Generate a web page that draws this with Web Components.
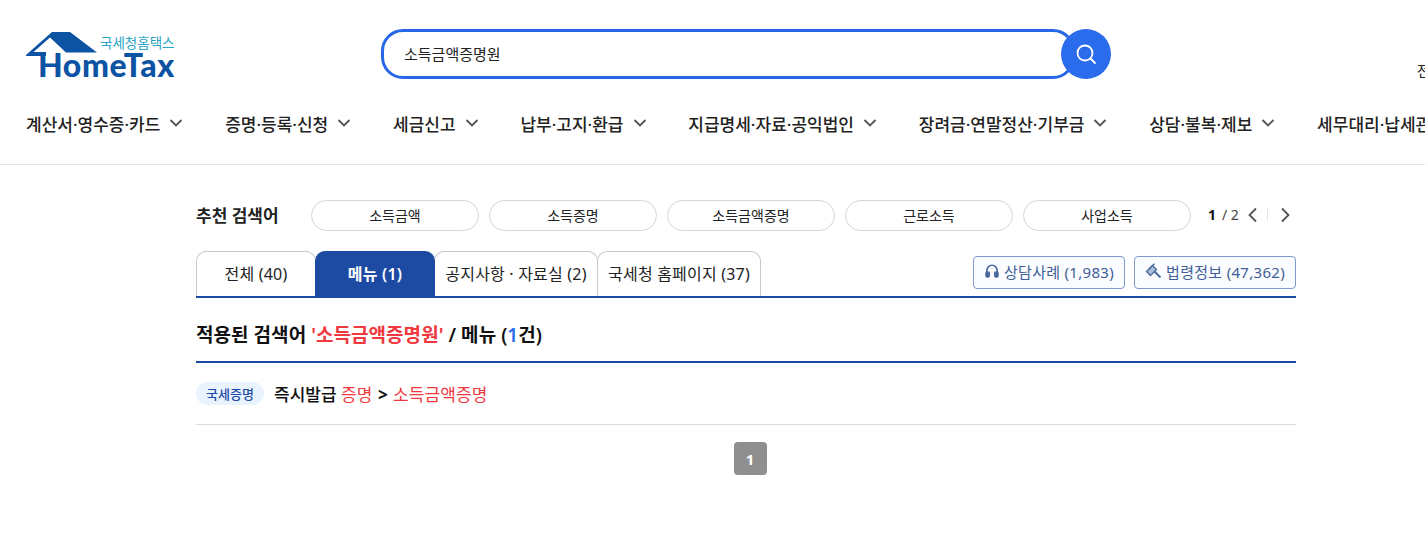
<!DOCTYPE html>
<html lang="ko">
<head>
<meta charset="utf-8">
<title>국세청홈택스</title>
<style>
  html, body { margin: 0; padding: 0; background: #fff; overflow: hidden; height: 100%; }
  body { width: 1492px; font-family: "Noto Sans", "Noto Sans CJK KR", sans-serif; color: #222; }
</style>
</head>
<body>
<site-header></site-header>
<main-nav>
  <nav-item>계산서·영수증·카드</nav-item>
  <nav-item>증명·등록·신청</nav-item>
  <nav-item>세금신고</nav-item>
  <nav-item>납부·고지·환급</nav-item>
  <nav-item>지급명세·자료·공익법인</nav-item>
  <nav-item>장려금·연말정산·기부금</nav-item>
  <nav-item>상담·불복·제보</nav-item>
  <nav-item>세무대리·납세관리</nav-item>
</main-nav>
<search-result></search-result>

<script>
class SiteHeader extends HTMLElement {
  connectedCallback() {
    this.attachShadow({mode: "open"}).innerHTML = `
    <style>
      :host { display: flex; align-items: flex-start; height: 98px; padding: 29px 0 0 26px; box-sizing: border-box; }
      .logo { position: relative; width: 150px; height: 52px; flex: none; }
      .logo svg { display: block; }
      .sub { position: absolute; left: 74px; top: 7px; font-size: 13.500px; line-height: 14px; color: #2aa5c6; white-space: nowrap; }
      .name { position: absolute; left: 12px; top: 23px; font: 900 32px/26px Lato, sans-serif; letter-spacing: .6px; color: #0d53a4; white-space: nowrap; }
      .search { display: flex; align-items: center; margin-left: 205px; flex: none; }
      .box { width: 694px; height: 50px; box-sizing: border-box; border: 3px solid #2667e8; border-radius: 22px; padding: 0 0 2px 20px; display: flex; align-items: center; font-size: 15px; color: #222; }
      .btn { width: 50px; height: 50px; border-radius: 50%; background: #2a6ceb; margin-left: -14px; display: flex; align-items: center; justify-content: center; flex: none; }
      .util { margin: 33px 0 0 306px; font-size: 14px; line-height: 18px; white-space: nowrap; color: #222; }
    </style>
    <div class="logo">
      <svg width="150" height="52" viewBox="0 0 150 52">
        <path fill="#0d53a4" d="M0 26 26 3H44L71 23.500H40L24 8.500 7.500 23H20V27H0Z"/>
      </svg>
      <span class="name">HomeTax</span>
      <span class="sub">국세청홈택스</span>
    </div>
    <div class="search">
      <div class="box">소득금액증명원</div>
      <div class="btn">
        <svg width="24" height="24" viewBox="0 0 24 24" fill="none" stroke="#fff" stroke-width="1.800" stroke-linecap="round"><circle cx="11" cy="11" r="7.500"/><path d="M16.500 16.500 21 21"/></svg>
      </div>
    </div>
    <div class="util">전체메뉴</div>`;
  }
}
customElements.define("site-header", SiteHeader);

class MainNav extends HTMLElement {
  connectedCallback() {
    this.attachShadow({mode: "open"}).innerHTML = `
    <style>
      :host { display: flex; height: 67px; box-sizing: border-box; padding: 0 0 0 26px; border-bottom: 1px solid #e2e2e2; gap: 41.800px; white-space: nowrap; overflow: hidden; }
    </style>
    <slot></slot>`;
  }
}
customElements.define("main-nav", MainNav);

class NavItem extends HTMLElement {
  connectedCallback() {
    this.attachShadow({mode: "open"}).innerHTML = `
    <style>
      :host { display: flex; align-items: center; gap: 9px; height: 50px; font-size: 17px; font-weight: 500; color: #222; flex: none; }
      svg { display: block; }
    </style>
    <slot></slot>
    <svg width="14" height="14" viewBox="0 0 14 14" fill="none" stroke="#555" stroke-width="1.900"><path d="M1.500 4 7 9.500 12.500 4"/></svg>`;
  }
}
customElements.define("nav-item", NavItem);

class PillChip extends HTMLElement {
  connectedCallback() {
    this.attachShadow({mode: "open"}).innerHTML = `
    <style>
      :host { display: flex; align-items: center; justify-content: center; width: 168px; height: 31px; box-sizing: border-box; border: 1px solid #d5d5d5; border-radius: 16px; padding-bottom: 2px; font-size: 14px; color: #222; flex: none; }
    </style>
    <slot></slot>`;
  }
}
customElements.define("pill-chip", PillChip);

class TabItem extends HTMLElement {
  connectedCallback() {
    this.attachShadow({mode: "open"}).innerHTML = `
    <style>
      :host { display: flex; align-items: center; justify-content: center; height: 45px; box-sizing: border-box; border: 1px solid #c8c8c8; border-bottom: 0; border-radius: 10px 10px 0 0; padding-bottom: 3px; font-size: 16px; letter-spacing: .2px; color: #222; background: #fff; flex: none; margin-left: -1px; white-space: nowrap; }
      :host(:first-child) { margin-left: 0; }
      :host([active]) { background: #1d4ba3; border-color: #1d4ba3; color: #fff; font-weight: 600; z-index: 1; position: relative; }
    </style>
    <slot></slot>`;
  }
}
customElements.define("tab-item", TabItem);

class LinkButton extends HTMLElement {
  connectedCallback() {
    this.attachShadow({mode: "open"}).innerHTML = `
    <style>
      :host { display: flex; align-items: center; justify-content: center; gap: 4px; height: 33px; box-sizing: border-box; border: 1px solid #7d9bcb; border-radius: 4px; padding-bottom: 3px; font-size: 15px; letter-spacing: .3px; color: #3f5f96; background: #fafcff; flex: none; white-space: nowrap; }
      ::slotted(svg) { display: block; }
    </style>
    <slot></slot>`;
  }
}
customElements.define("link-button", LinkButton);

class SearchResult extends HTMLElement {
  connectedCallback() {
    this.attachShadow({mode: "open"}).innerHTML = `
    <style>
      :host { display: block; width: 1100px; margin: 0 auto; }
      .rec { display: flex; align-items: center; height: 31px; margin-top: 35px; }
      .rec h3 { margin: 0 0 2px; width: 115px; font-size: 17px; font-weight: 600; color: #222; flex: none; }
      .chips { display: flex; gap: 10px; }
      .pager { display: flex; align-items: center; margin-left: 17px; padding-bottom: 2px; font-size: 14px; color: #444; white-space: nowrap; }
      .pager b { color: #111; margin-right: 6px; }
      .pager svg { display: block; }
      .sep { width: 1px; height: 12px; background: #e3e3e3; margin: 0 12px 0 9px; }
      .tabs { display: flex; align-items: flex-end; height: 47px; margin-top: 18px; border-bottom: 2px solid #1d4ba3; }
      .tabs .links { display: flex; gap: 9px; margin-left: auto; margin-bottom: 7px; }
      .title { display: flex; align-items: center; height: 65px; box-sizing: border-box; padding-top: 8px; border-bottom: 2px solid #1d4ba3; font-size: 19px; letter-spacing: .05px; font-weight: 600; color: #111; white-space: pre; }
      .red { color: #f0393f; }
      .blue { color: #2a6ceb; }
      .row { display: flex; align-items: center; height: 61px; border-bottom: 1px solid #dcdcdc; font-size: 17px; font-weight: 500; color: #111; white-space: pre; }
      .tag { display: flex; align-items: center; justify-content: center; width: 68px; height: 23px; border-radius: 12px; background: #e9f3fe; color: #1d4ba3; font-size: 13px; margin-right: 10px; font-weight: 500; }
      .row .red { font-weight: 400; letter-spacing: .1px; }
      .gt { margin: 0 1px; font-weight: 700; }
      .page { display: flex; justify-content: center; margin-top: 17px; padding-left: 8px; }
      .page span { display: flex; align-items: center; justify-content: center; width: 33px; height: 33px; border-radius: 4px; background: #8f8f8f; color: #fff; font-size: 15px; font-weight: 700; }
    </style>
    <div class="rec">
      <h3>추천 검색어</h3>
      <div class="chips">
        <pill-chip>소득금액</pill-chip>
        <pill-chip>소득증명</pill-chip>
        <pill-chip>소득금액증명</pill-chip>
        <pill-chip>근로소득</pill-chip>
        <pill-chip>사업소득</pill-chip>
      </div>
      <div class="pager">
        <b>1</b>/ 2
        <svg style="margin-left:7px" width="12" height="16" viewBox="0 0 12 16" fill="none" stroke="#555" stroke-width="1.800"><path d="M10 1.500 3.500 8 10 14.500"/></svg>
        <i class="sep"></i>
        <svg width="12" height="16" viewBox="0 0 12 16" fill="none" stroke="#555" stroke-width="1.800"><path d="M2 1.500 8.500 8 2 14.500"/></svg>
      </div>
    </div>
    <div class="tabs">
      <tab-item style="width:120px">전체 (40)</tab-item>
      <tab-item active style="width:120px">메뉴 (1)</tab-item>
      <tab-item style="width:164px">공지사항 · 자료실 (2)</tab-item>
      <tab-item style="width:164px">국세청 홈페이지 (37)</tab-item>
      <div class="links">
        <link-button style="width:152px">
          <svg width="16" height="16" viewBox="0 0 16 16" fill="none" stroke="#4a6a9c" stroke-width="1.600"><path d="M2.800 10V7.500a5.200 5.200 0 0 1 10.400 0V10"/><rect x="2" y="9" width="3.200" height="5" rx="1.200" fill="#4a6a9c"/><rect x="10.800" y="9" width="3.200" height="5" rx="1.200" fill="#4a6a9c"/></svg>
          상담사례 (1,983)
        </link-button>
        <link-button style="width:162px">
          <svg width="17" height="16" viewBox="0 0 17 16" fill="none" stroke="#4a6a9c" stroke-width="1.300"><path d="M1.500 8.500 7.500 2.500 11.500 6.500 5.500 12.500Z" fill="#a9bcd8"/><path d="M9.500 8.500 15.500 14.500" stroke-width="2"/><path d="M3.500 6.500 9.500 0.800"/></svg>
          법령정보 (47,362)
        </link-button>
      </div>
    </div>
    <div class="title"><span>적용된 검색어 <span class="red">'소득금액증명원'</span> / 메뉴 (<span class="blue">1</span>건)</span></div>
    <div class="row"><span class="tag">국세증명</span><span>즉시발급 <span class="red">증명</span> <span class="gt">&gt;</span> <span class="red">소득금액증명</span></span></div>
    <div class="page"><span>1</span></div>`;
  }
}
customElements.define("search-result", SearchResult);
</script>
</body>
</html>
